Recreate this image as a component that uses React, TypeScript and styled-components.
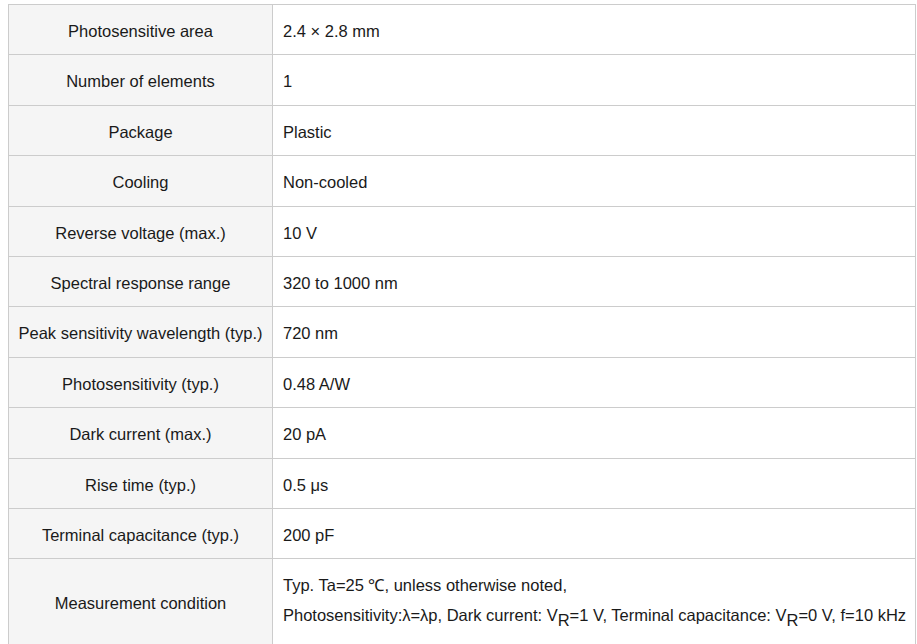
import React from "react";
import styled, { createGlobalStyle } from "styled-components";

const Global = createGlobalStyle`
  html, body { margin: 0; padding: 0; background: #fff; }
  body { padding: 4px 1px 0 8px; font-family: "Liberation Sans", Arial, sans-serif; }
`;

const Table = styled.table`
  width: 100%;
  table-layout: fixed;
  border-collapse: collapse;
  font-family: "Liberation Sans", Arial, sans-serif;
  font-size: 16.5px;
  color: #1a1a1a;
  border: 1px solid #cccccc;
`;

const KeyCol = styled.col`
  width: 264px;
`;

const Head = styled.th`
  background: #f5f5f5;
  font-weight: normal;
  text-align: center;
  padding: 12px 4px 8px;
  line-height: 29.4px;
  border: 1px solid #cccccc;
  white-space: nowrap;
`;

const Cell = styled.td`
  background: #ffffff;
  text-align: left;
  padding: 12px 0 8px 10px;
  line-height: 29.4px;
  border: 1px solid #cccccc;
  white-space: nowrap;
`;

const Sub = styled.sub`
  font-size: 100%;
  vertical-align: -5px;
  line-height: 34px;
`;

const rows: [string, React.ReactNode][] = [
  ["Photosensitive area", "2.4 × 2.8 mm"],
  ["Number of elements", "1"],
  ["Package", "Plastic"],
  ["Cooling", "Non-cooled"],
  ["Reverse voltage (max.)", "10 V"],
  ["Spectral response range", "320 to 1000 nm"],
  ["Peak sensitivity wavelength (typ.)", "720 nm"],
  ["Photosensitivity (typ.)", "0.48 A/W"],
  ["Dark current (max.)", "20 pA"],
  ["Rise time (typ.)", "0.5 μs"],
  ["Terminal capacitance (typ.)", "200 pF"],
  [
    "Measurement condition",
    <>
      Typ. Ta=25 ℃, unless otherwise noted,
      <br />
      Photosensitivity:λ=λp, Dark current: V<Sub>R</Sub>=1 V, Terminal capacitance: V
      <Sub>R</Sub>=0 V, f=10 kHz
    </>,
  ],
];

export default function App() {
  return (
    <>
      <Global />
      <Table>
        <colgroup>
          <KeyCol />
          <col />
        </colgroup>
        <tbody>
          {rows.map(([k, v], i) => (
            <tr key={i}>
              <Head scope="row">{k}</Head>
              <Cell>{v}</Cell>
            </tr>
          ))}
        </tbody>
      </Table>
    </>
  );
}
